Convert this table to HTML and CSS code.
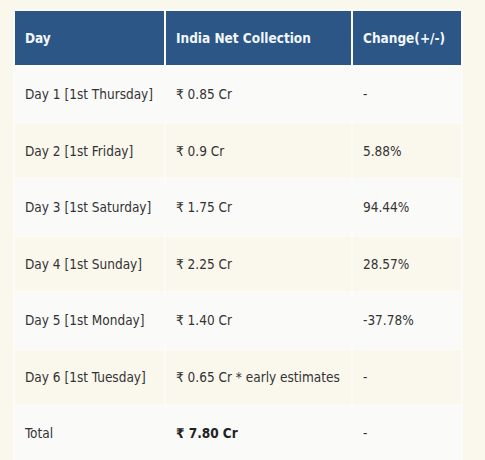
FILE: index.html
```html
<!DOCTYPE html>
<html lang="en">
<head>
  <meta charset="UTF-8" />
  <title>Box Office Collection</title>
  <meta name="viewport" content="width=device-width, initial-scale=1.0"/>
  <link rel="stylesheet" href="styles.css">
</head>
<body>

  <table class="collection">
    <thead>
      <tr>
        <th class="col-day">Day</th>
        <th class="col-net">India Net Collection</th>
        <th class="col-change">Change(+/-)</th>
      </tr>
    </thead>
    <tbody>
      <tr>
        <td>Day 1 [1st Thursday]</td>
        <td>₹ 0.85 Cr</td>
        <td>-</td>
      </tr>
      <tr>
        <td>Day 2 [1st Friday]</td>
        <td>₹ 0.9 Cr</td>
        <td>5.88%</td>
      </tr>
      <tr>
        <td>Day 3 [1st Saturday]</td>
        <td>₹ 1.75 Cr</td>
        <td>94.44%</td>
      </tr>
      <tr>
        <td>Day 4 [1st Sunday]</td>
        <td>₹ 2.25 Cr</td>
        <td>28.57%</td>
      </tr>
      <tr>
        <td>Day 5 [1st Monday]</td>
        <td>₹ 1.40 Cr</td>
        <td>-37.78%</td>
      </tr>
      <tr>
        <td>Day 6 [1st Tuesday]</td>
        <td>₹ 0.65 Cr * early estimates</td>
        <td>-</td>
      </tr>
      <tr>
        <td>Total</td>
        <td><strong>₹ 7.80 Cr</strong></td>
        <td>-</td>
      </tr>
    </tbody>
  </table>

</body>
</html>
```

FILE: styles.css
```css
body {
  font-family: "DejaVu Sans Condensed", "DejaVu Sans", sans-serif;
  background: #faf7ed;
  margin: 0;
  padding: 9px 0 0 13px;
  color: #333;
}

/* Tabla de recaudación */
.collection {
  border-collapse: separate;
  border-spacing: 2px;
  background: #fcfbf7;
  font-size: 13.5px;
}

.collection th,
.collection td {
  text-align: left;
  vertical-align: middle;
  padding: 0 10px;
}

.collection th {
  background-color: #2b5685;
  color: #f2f6fb;
  font-weight: bold;
  height: 54px;
}

.collection td {
  height: 54.5px;
}

.col-day {
  width: 129px;
}

.col-net {
  width: 165px;
}

.col-change {
  width: 88px;
}

.collection tbody tr:nth-child(odd) td {
  background-color: #fafaf9;
}

.collection tbody tr:nth-child(even) td {
  background-color: #faf7ec;
}

.collection strong {
  color: #222;
}
```
